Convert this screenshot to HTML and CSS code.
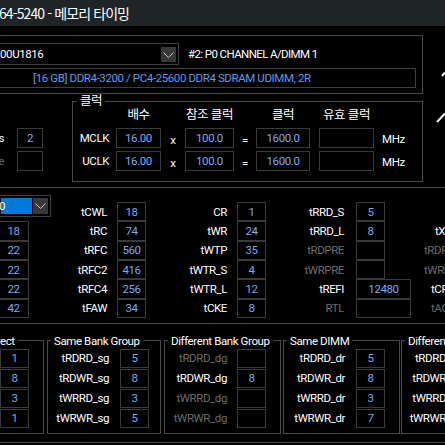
FILE: index.html
```html
<!DOCTYPE html>
<html lang="ko">
<head>
<meta charset="utf-8">
<title>메모리 타이밍</title>
<link rel="stylesheet" href="styles.css">
</head>
<body>
<header class="titlebar"><span class="title">64-5240 - 메모리 타이밍</span></header>
<svg class="deco" viewBox="0 0 15 70" width="15" height="70"><path d="M12 16 L15 12.5"/><path d="M7 62 L15 53.5"/></svg>
<main class="app">
  <section class="dimm-box">
    <div class="dimm-row">
      <div class="combo combo-part"><span class="combo-text">00U1816</span><span class="combo-btn"><svg viewBox="0 0 15 15"><path d="M2.5 5.5 L7.5 10.5 L12.5 5.5"/></svg></span></div>
      <span class="slot">#2: P0 CHANNEL A/DIMM 1</span>
    </div>
    <div class="spd">[16 GB] DDR4-3200 / PC4-25600 DDR4 SDRAM UDIMM, 2R</div>
  </section>

  <section class="mid">
    <div class="misc">
      <span class="lbl">Ranks</span><span class="val">2</span>
      <span class="lbl off">Mode</span><span class="val"></span>
    </div>
    <fieldset class="clock">
      <legend>클럭</legend>
      <div class="clock-grid">
        <span></span><span class="hd">배수</span><span></span><span class="hd">참조 클럭</span><span></span><span class="hd">클럭</span><span></span><span class="hd">유효 클럭</span><span></span>
        <span class="lbl">MCLK</span><span class="val">16.00</span><span class="op">x</span><span class="val">100.0</span><span class="op">=</span><span class="val">1600.0</span><span></span><span class="val"></span><span class="unit">MHz</span>
        <span class="lbl">UCLK</span><span class="val">16.00</span><span class="op">x</span><span class="val">100.0</span><span class="op">=</span><span class="val">1600.0</span><span></span><span class="val"></span><span class="unit">MHz</span>
      </div>
    </fieldset>
  </section>

  <section class="timings">
    <div class="combo combo-small"><span class="combo-sel">0</span><span class="combo-btn"><svg viewBox="0 0 15 15"><path d="M2.5 5.5 L7.5 10.5 L12.5 5.5"/></svg></span></div>
    <span class="lbl">tCWL</span><span class="val">18</span>
    <span class="lbl">CR</span><span class="val">1</span>
    <span class="lbl c4">tRRD_S</span><span class="val">5</span>
    <span></span>

    <span class="val">18</span>
    <span class="lbl">tRC</span><span class="val">74</span>
    <span class="lbl">tWR</span><span class="val">24</span>
    <span class="lbl c4">tRRD_L</span><span class="val">8</span>
    <span class="lbl5 i11">tXP</span>

    <span class="val">22</span>
    <span class="lbl">tRFC</span><span class="val">560</span>
    <span class="lbl">tWTP</span><span class="val">35</span>
    <span class="lbl c4 off">tRDPRE</span><span class="val"></span>
    <span class="lbl5 off">tRDPDEN</span>

    <span class="val">22</span>
    <span class="lbl">tRFC2</span><span class="val">416</span>
    <span class="lbl">tWTR_S</span><span class="val">4</span>
    <span class="lbl c4 off">tWRPRE</span><span class="val"></span>
    <span class="lbl5 off">tWRPDEN</span>

    <span class="val">22</span>
    <span class="lbl">tRFC4</span><span class="val">256</span>
    <span class="lbl">tWTR_L</span><span class="val">12</span>
    <span class="lbl c4">tREFI</span><span class="val wide">12480</span>
    <span class="lbl5 i7">tCPDED</span>

    <span class="val">42</span>
    <span class="lbl">tFAW</span><span class="val">34</span>
    <span class="lbl">tCKE</span><span class="val">8</span>
    <span class="lbl c4 off">RTL</span><span class="val wide"></span>
    <span class="lbl5 off i7">tAONPD</span>
  </section>

  <section class="groups">
    <fieldset class="grp g-first">
      <legend>Direct</legend>
      <div class="grp-grid">
        <span></span><span class="val">1</span>
        <span></span><span class="val">8</span>
        <span></span><span class="val">3</span>
        <span></span><span class="val">1</span>
      </div>
    </fieldset>
    <fieldset class="grp g-sbg">
      <legend>Same Bank Group</legend>
      <div class="grp-grid">
        <span class="lbl">tRDRD_sg</span><span class="val">5</span>
        <span class="lbl">tRDWR_sg</span><span class="val">8</span>
        <span class="lbl">tWRRD_sg</span><span class="val">3</span>
        <span class="lbl">tWRWR_sg</span><span class="val">5</span>
      </div>
    </fieldset>
    <fieldset class="grp g-dbg">
      <legend>Different Bank Group</legend>
      <div class="grp-grid">
        <span class="lbl off">tRDRD_dg</span><span class="val"></span>
        <span class="lbl">tRDWR_dg</span><span class="val">8</span>
        <span class="lbl off">tWRRD_dg</span><span class="val"></span>
        <span class="lbl off">tWRWR_dg</span><span class="val"></span>
      </div>
    </fieldset>
    <fieldset class="grp g-sd">
      <legend>Same DIMM</legend>
      <div class="grp-grid">
        <span class="lbl">tRDRD_dr</span><span class="val">5</span>
        <span class="lbl">tRDWR_dr</span><span class="val">8</span>
        <span class="lbl">tWRRD_dr</span><span class="val">3</span>
        <span class="lbl">tWRWR_dr</span><span class="val">7</span>
      </div>
    </fieldset>
    <fieldset class="grp g-dd">
      <legend>Different DIMM</legend>
      <div class="grp-grid">
        <span class="lbl">tRDRD_dd</span><span class="val">6</span>
        <span class="lbl">tRDWR_dd</span><span class="val">8</span>
        <span class="lbl">tWRRD_dd</span><span class="val">4</span>
        <span class="lbl">tWRWR_dd</span><span class="val">7</span>
      </div>
    </fieldset>
  </section>
</main>
</body>
</html>
```

FILE: styles.css
```css
* { box-sizing: border-box; }
html, body { margin: 0; padding: 0; }
body {
  width: 445px;
  height: 445px;
  overflow: hidden;
  position: relative;
  background: #000;
  color: #fff;
  font-family: Roboto, "Noto Sans CJK KR", sans-serif;
  font-size: 11.5px;
  letter-spacing: -0.4px;
}

.titlebar {
  height: 26px;
  background: #1f2427;
  display: flex;
  align-items: center;
  font-family: "Noto Sans CJK KR", Roboto, sans-serif;
  font-size: 14px;
  letter-spacing: -0.9px;
  margin-left: -1px;
  padding-bottom: 1px;
}

.deco {
  position: absolute;
  left: 430px;
  top: 60px;
  fill: none;
  stroke: #f2f2f2;
  stroke-width: 2;
}

.app {
  margin-left: -20px;
  width: 620px;
}

/* common */
.val {
  border: 1px solid #3a3a3a;
  color: #79aaf2;
  display: flex;
  align-items: center;
  justify-content: center;
  white-space: nowrap;
}
.lbl {
  text-align: right;
  white-space: nowrap;
  align-self: center;
  justify-self: end;
}
.off { color: #6b6b6b; }

.combo {
  border: 1px solid #3f3f3f;
  display: flex;
  align-items: center;
}
.combo-btn {
  width: 15px;
  height: 15px;
  background: #383838;
  flex: none;
  display: flex;
}
.combo-btn svg {
  width: 15px;
  height: 15px;
  fill: none;
  stroke: #c8c8c8;
  stroke-width: 1;
}

/* DIMM info box */
.dimm-box {
  margin-top: 9px;
  width: 443px;
  height: 59px;
  border: 1px solid #4a4a4a;
  padding: 7px 5px 5px 5px;
}
.dimm-row {
  display: flex;
  align-items: center;
  height: 22px;
}
.combo-part {
  width: 193px;
  height: 22px;
  padding: 0 2px 0 13px;
  justify-content: space-between;
}
.slot {
  margin-left: 9px;
  letter-spacing: -0.6px;
}
.spd {
  margin-top: 3px;
  width: 430px;
  height: 20px;
  border: 1px solid #3f3f3f;
  padding-left: 46px;
  line-height: 18px;
  color: #5f9be8;
}

/* middle */
.mid {
  display: flex;
  align-items: flex-start;
}
.misc {
  width: 92px;
  padding: 34px 29px 0 0;
  display: grid;
  grid-template-columns: minmax(0, 1fr) 26px;
  grid-auto-rows: 20px;
  row-gap: 3px;
  column-gap: 13px;
}
.clock {
  width: 351px;
  margin: 0;
  padding: 0 0 10px 0;
  border: 1px solid #4a4a4a;
  min-width: 0;
}
.clock legend, .grp legend {
  padding: 0 3px;
  margin-left: 3px;
  line-height: 14px;
  height: 14px;
  white-space: nowrap;
}
.clock legend {
  font-size: 12.5px;
  margin-left: 4px;
}
.clock-grid {
  display: grid;
  grid-template-columns: 43px 45px 24px 49px 22px 54px 9px 55px 1fr;
  grid-template-rows: 17px 20px 20px;
  row-gap: 3px;
}
.clock-grid .lbl { padding-right: 7px; }
.hd {
  justify-self: center;
  align-self: start;
  line-height: 14px;
  font-size: 12.5px;
  white-space: nowrap;
}
.op {
  text-align: center;
  align-self: center;
  padding-top: 3px;
}
.unit {
  align-self: center;
  padding-left: 8px;
  padding-top: 2px;
}

/* timings */
.timings {
  margin-top: 5px;
  border-top: 1px solid #4a4a4a;
  border-bottom: 1px solid #4a4a4a;
  padding: 14px 0 5px 18px;
  display: grid;
  grid-template-columns: 31px 88px 29px 91px 29px 90px 29px 1fr;
  grid-template-rows: repeat(6, 19.33px);
}
.timings .lbl { padding-right: 10px; }
.timings .lbl.c4 { padding-right: 12px; }
.timings .val.wide { width: 55px; }
.lbl5 {
  white-space: nowrap;
  align-self: center;
  padding-left: 39px;
}
.lbl5.i11 { padding-left: 50px; }
.lbl5.i7 { padding-left: 46px; }

.combo-small {
  width: 53px;
  height: 22px;
  margin-top: -7px;
  padding: 0 2px;
  gap: 1px;
}
.combo-sel {
  flex: 1;
  height: 16px;
  background: #0078d7;
  line-height: 16px;
  text-indent: -2px;
}
.combo-small .combo-btn { height: 16px; }

/* bottom groups */
.groups {
  display: flex;
  padding: 10px 0 8px;
  border-bottom: 1px solid #4a4a4a;
}
.grp {
  margin: 0;
  padding: 1px 14px 5px 0;
  border: 1px solid #4a4a4a;
  min-width: 0;
  flex: none;
}
.grp-grid {
  display: grid;
  grid-template-columns: minmax(0, 1fr) 29px;
  grid-auto-rows: 19px;
  row-gap: 1px;
  column-gap: 10px;
}
.g-first { width: 64px; margin-right: 3px; }
.g-sbg { width: 114px; margin-right: 3px; padding-right: 11px; }
.g-sbg .grp-grid { column-gap: 11px; }
.g-dbg { width: 117px; margin-right: 2px; }
.g-sd { width: 117px; margin-right: 1px; }
.g-sd .grp-grid { column-gap: 11px; }
.g-dd { width: 117px; }
.g-dd .grp-grid { column-gap: 11px; }
```
